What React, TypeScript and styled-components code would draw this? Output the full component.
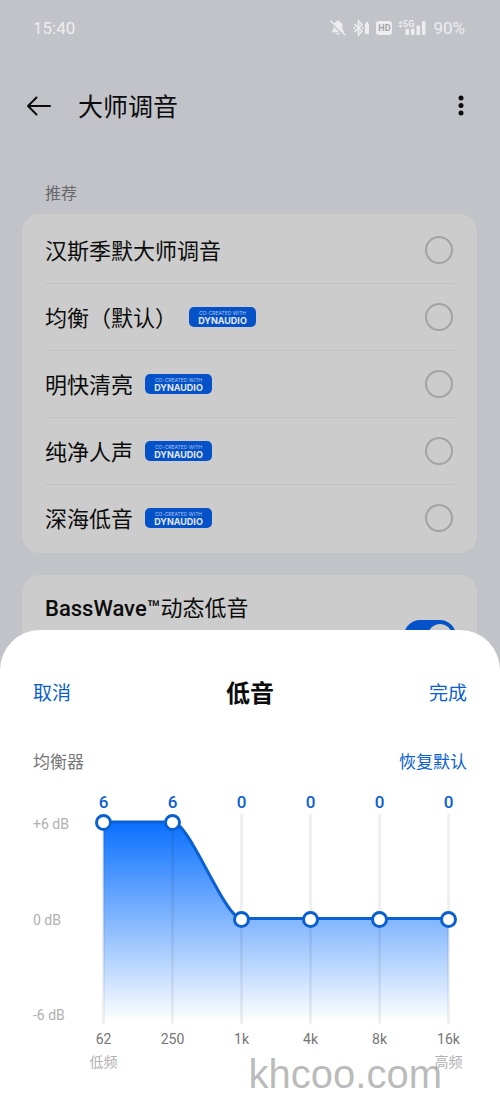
import React, { useState } from "react";
import styled, { createGlobalStyle } from "styled-components";

const GlobalStyle = createGlobalStyle`
  *, *::before, *::after { box-sizing: border-box; }
  body {
    margin: 0;
    background: #c2c3c8;
    font-family: Roboto, "Noto Sans CJK SC", sans-serif;
    color: #0c0c0d;
  }
  button {
    border: 0;
    padding: 0;
    background: none;
    font: inherit;
    color: inherit;
    cursor: pointer;
  }
  svg { display: block; }
`;

const BLUE = "#0a60d0";

const Screen = styled.div`
  min-height: 100vh;
  background: #c2c3c8;
`;

const StatusBar = styled.div`
  display: flex;
  align-items: center;
  justify-content: space-between;
  height: 56px;
  padding: 0 35px 0 33px;
  font-size: 17px;
  color: #ededf0;
`;

const StatusIcons = styled.div`
  display: flex;
  align-items: center;
  gap: 6px;
`;

const AppBar = styled.header`
  display: flex;
  align-items: center;
  height: 100px;
  padding: 0 27px;
`;

const IconButton = styled.button`
  display: flex;
  align-items: center;
  justify-content: center;
  height: 40px;
`;

const PageTitle = styled.h1`
  flex: 1;
  margin: 0 0 0 27px;
  padding-top: 3px;
  font-size: 25px;
  font-weight: 400;
  line-height: 40px;
`;

const Content = styled.main`
  padding: 26px 23px 0 22px;
`;

const SectionLabel = styled.h2`
  margin: 0 0 8px;
  padding-left: 23px;
  font-size: 16px;
  font-weight: 400;
  line-height: 24px;
  color: #66676a;
`;

const Card = styled.section`
  border-radius: 18px;
  background: #cccccc;
`;

const PresetCard = styled(Card)`
  padding: 3px 22px 2px 23px;
`;

const PresetRow = styled.label`
  display: flex;
  align-items: center;
  gap: 12px;
  height: 67px;
  padding-right: 2px;
  border-bottom: 1px solid #c2c2c3;
  cursor: pointer;

  &:last-child {
    height: 66px;
    border-bottom: 0;
  }
`;

const PresetName = styled.span`
  padding-top: 3px;
  font-size: 22px;
  line-height: 32px;
`;

const Radio = styled.input`
  appearance: none;
  width: 28px;
  height: 28px;
  margin: 0 0 0 auto;
  border: 2px solid #a3a3a4;
  border-radius: 50%;
  cursor: pointer;

  &:checked { border: 8px solid #0552c8; }
`;

const BadgeBox = styled.span`
  display: flex;
  flex-direction: column;
  align-items: center;
  justify-content: center;
  width: 67px;
  height: 20px;
  border-radius: 5px;
  background: #0552c8;
  font-family: Inter, sans-serif;
`;

const BadgeSmall = styled.span`
  font-size: 5px;
  line-height: 6px;
  color: #a9c3ea;
`;

const BadgeBrand = styled.span`
  font-size: 9px;
  font-weight: 700;
  line-height: 9px;
  color: #e3e8f0;
`;

const BassCard = styled(Card)`
  display: flex;
  justify-content: space-between;
  align-items: center;
  height: 122px;
  margin-top: 22px;
  padding: 18px 21px 18px 23px;
`;

const BassTitle = styled.label`
  align-self: flex-start;
  font-size: 22px;
  line-height: 32px;
`;

const Latin = styled.span`
  font-weight: 500;
`;

const Toggle = styled.input`
  appearance: none;
  display: flex;
  align-items: center;
  width: 52px;
  height: 32px;
  margin: 0;
  padding: 0 4px;
  border-radius: 16px;
  background: #a3a3a4;
  cursor: pointer;

  &::before {
    content: "";
    width: 24px;
    height: 24px;
    border-radius: 50%;
    background: #cccccc;
  }

  &:checked {
    justify-content: flex-end;
    background: #0552c8;
  }
`;

const Sheet = styled.section`
  position: fixed;
  left: 0;
  right: 0;
  bottom: 0;
  padding: 42px 0 30px;
  border-radius: 40px 40px 0 0;
  background: #ffffff;
`;

const SheetHeader = styled.div`
  display: grid;
  grid-template-columns: 1fr auto 1fr;
  align-items: center;
  padding: 2px 33px 0;
`;

const SheetTitle = styled.h2`
  margin: 0;
  font-size: 24px;
  font-weight: 700;
  line-height: 40px;
`;

const TextButton = styled.button<{ $size: number; $end?: boolean }>`
  justify-self: ${(p) => (p.$end ? "end" : "start")};
  font-size: ${(p) => p.$size}px;
  line-height: 24px;
  color: ${BLUE};
`;

const EqHeader = styled.div`
  display: flex;
  justify-content: space-between;
  margin-top: 36px;
  padding: 0 33px;
`;

const EqTitle = styled.h3`
  margin: 0;
  font-size: 17px;
  font-weight: 400;
  line-height: 24px;
  color: #777777;
`;

const Chart = styled.div`
  display: flex;
  margin-top: 16px;
  padding: 0 17px 0 33px;
`;

const Axis = styled.div`
  display: flex;
  flex-direction: column;
  justify-content: space-between;
  width: 36px;
  height: 207px;
  margin-top: 26px;
  font-size: 14px;
  line-height: 16px;
  color: #b0b0b0;
  white-space: nowrap;
`;

const Plot = styled.div`
  position: relative;
  flex: 1;
  display: grid;
  grid-template-columns: repeat(6, 1fr);
`;

const Curve = styled.svg`
  position: absolute;
  left: 0;
  top: 24px;
  width: 100%;
  height: 210px;
`;

const Band = styled.div`
  position: relative;
  display: flex;
  flex-direction: column;
  align-items: center;
`;

const BandValue = styled.output`
  font-size: 17px;
  font-weight: 500;
  line-height: 24px;
  color: ${BLUE};
`;

const BandSlider = styled.input`
  appearance: none;
  writing-mode: vertical-lr;
  direction: rtl;
  width: 17px;
  height: 210px;
  margin: 0;
  background: none;
  cursor: pointer;

  &::-webkit-slider-runnable-track {
    width: 17px;
    height: 210px;
    background: linear-gradient(90deg, transparent 7px, rgba(0, 0, 0, 0.06) 7px, rgba(0, 0, 0, 0.06) 10px, transparent 10px);
  }

  &::-webkit-slider-thumb {
    appearance: none;
    width: 17px;
    height: 17px;
    border: 3px solid ${BLUE};
    border-radius: 50%;
    background: #ffffff;
  }
`;

const BandLabel = styled.label`
  font-size: 14px;
  line-height: 30px;
  color: #757575;
`;

const BandNote = styled.span`
  font-size: 14px;
  line-height: 16px;
  color: #b0b0b0;
`;

const Watermark = styled.div`
  position: absolute;
  right: 58px;
  bottom: 6px;
  font-family: "Liberation Sans", sans-serif;
  font-size: 40px;
  line-height: 40px;
  color: rgba(120, 120, 120, 0.52);
  pointer-events: none;
`;

const presets = [
  { name: "汉斯季默大师调音", badge: false },
  { name: "均衡（默认）", badge: true },
  { name: "明快清亮", badge: true },
  { name: "纯净人声", badge: true },
  { name: "深海低音", badge: true },
];

const bands = [
  { freq: "62", note: "低频" },
  { freq: "250" },
  { freq: "1k" },
  { freq: "4k" },
  { freq: "8k" },
  { freq: "16k", note: "高频" },
];

const MutedBell = () => (
  <svg width="18" height="18" viewBox="0 0 18 18" fill="currentColor">
    <path d="M9 1.500c.8 0 1.200.5 1.200 1.100 2 .6 3.300 2.300 3.300 4.500v3.400l1.600 2v.8H3v-.8l1.500-2V7.100c0-2.200 1.300-3.900 3.300-4.500C7.800 2 8.200 1.500 9 1.500zM7.300 14.200h3.400c0 1-.7 1.700-1.700 1.700s-1.700-.7-1.700-1.700z" />
    <path d="M.8 2.600L15.800 17" stroke="#c2c3c8" strokeWidth="2" />
    <path d="M1.500 1.800L16.500 16.300" stroke="currentColor" strokeWidth="1.400" />
  </svg>
);

const Bluetooth = () => (
  <svg width="17" height="18" viewBox="0 0 17 18" fill="none" stroke="currentColor" strokeWidth="1.600">
    <path d="M1.500 5.200l7.500 7L5.500 15.700V2.300L9 5.800l-7.500 7" />
    <circle cx="1.200" cy="9" r="1.100" fill="currentColor" stroke="none" />
    <circle cx="9.800" cy="9" r="1.100" fill="currentColor" stroke="none" />
    <path d="M12 4.500h1V3h2v1.500h1V15h-4z" fill="currentColor" stroke="none" />
  </svg>
);

const HdBox = styled.span`
  display: flex;
  align-items: center;
  justify-content: center;
  width: 16px;
  height: 14px;
  border-radius: 3px;
  background: currentColor;
`;

const HdText = styled.span`
  font-size: 9px;
  font-weight: 700;
  line-height: 14px;
  color: #a4a5aa;
`;

const Signal = () => (
  <svg width="29" height="18" viewBox="0 0 29 18" fill="currentColor">
    <path d="M2.500 2l2.500 2.600H0zM2.500 8.800L0 6.200h5z" />
    <text x="5" y="8" fontSize="9" fontWeight="700" fontFamily="Roboto, sans-serif">5G</text>
    <rect x="7.500" y="10" width="3.500" height="6" rx=".8" />
    <rect x="13" y="9.500" width="3.500" height="6.500" rx=".8" />
    <rect x="18.500" y="6.500" width="3.500" height="9.500" rx=".8" />
    <rect x="24" y="2" width="3.500" height="14" rx=".8" />
  </svg>
);

const DynaudioBadge = () => (
  <BadgeBox>
    <BadgeSmall>CO-CREATED WITH</BadgeSmall>
    <BadgeBrand>DYNAUDIO</BadgeBrand>
  </BadgeBox>
);

const pointX = (i: number) => 50 + i * 100;
const pointY = (v: number) => 8 + ((6 - v) / 12) * 193;

function curvePath(values: number[]) {
  return values.reduce((path, v, i) => {
    if (i === 0) return `M${pointX(0)} ${pointY(v)}`;
    const before = pointY(values[i - 1]);
    return `${path} C${pointX(i - 1) + 25} ${before} ${pointX(i) - 25} ${pointY(v)} ${pointX(i)} ${pointY(v)}`;
  }, "");
}

export default function App() {
  const [values, setValues] = useState([6, 6, 0, 0, 0, 0]);
  const line = curvePath(values);

  return (
    <Screen lang="zh-CN">
      <GlobalStyle />
      <StatusBar>
        <span>15:40</span>
        <StatusIcons>
          <MutedBell />
          <Bluetooth />
          <HdBox><HdText>HD</HdText></HdBox>
          <Signal />
          <span>90%</span>
        </StatusIcons>
      </StatusBar>

      <AppBar>
        <IconButton aria-label="返回">
          <svg width="24" height="20" viewBox="0 0 24 20" fill="none" stroke="currentColor" strokeWidth="2" strokeLinecap="round" strokeLinejoin="round">
            <path d="M23 10H1.200M9.500 1.500L1 10l8.500 8.500" />
          </svg>
        </IconButton>
        <PageTitle>大师调音</PageTitle>
        <IconButton aria-label="更多">
          <svg width="24" height="24" viewBox="0 0 24 24" fill="currentColor">
            <circle cx="12" cy="4" r="2.500" />
            <circle cx="12" cy="11.500" r="2.500" />
            <circle cx="12" cy="19" r="2.500" />
          </svg>
        </IconButton>
      </AppBar>

      <Content>
        <SectionLabel>推荐</SectionLabel>
        <PresetCard>
          {presets.map((preset) => (
            <PresetRow key={preset.name}>
              <PresetName>{preset.name}</PresetName>
              {preset.badge && <DynaudioBadge />}
              <Radio type="radio" name="preset" />
            </PresetRow>
          ))}
        </PresetCard>
        <BassCard>
          <BassTitle htmlFor="bass-wave"><Latin>BassWave™</Latin>动态低音</BassTitle>
          <Toggle id="bass-wave" type="checkbox" defaultChecked />
        </BassCard>
      </Content>

      <Sheet>
        <SheetHeader>
          <TextButton $size={19}>取消</TextButton>
          <SheetTitle>低音</SheetTitle>
          <TextButton $size={19} $end>完成</TextButton>
        </SheetHeader>
        <EqHeader>
          <EqTitle>均衡器</EqTitle>
          <TextButton $size={17} $end onClick={() => setValues([6, 6, 0, 0, 0, 0])}>恢复默认</TextButton>
        </EqHeader>
        <Chart>
          <Axis>
            <span>+6 dB</span>
            <span>0 dB</span>
            <span>-6 dB</span>
          </Axis>
          <Plot>
            <Curve viewBox="0 0 600 210" preserveAspectRatio="none" aria-hidden="true">
              <defs>
                <linearGradient id="eq-fill" gradientUnits="userSpaceOnUse" x1="0" y1="8" x2="0" y2="208">
                  <stop offset="0" stopColor="#0a70ff" />
                  <stop offset="1" stopColor="#0a70ff" stopOpacity="0" />
                </linearGradient>
              </defs>
              <path d={`${line} V210 H50 Z`} fill="url(#eq-fill)" />
              <path d={line} fill="none" stroke={BLUE} strokeWidth="3" vectorEffect="non-scaling-stroke" />
            </Curve>
            {bands.map((band, i) => (
              <Band key={band.freq}>
                <BandValue htmlFor={`band-${band.freq}`}>{values[i]}</BandValue>
                <BandSlider
                  id={`band-${band.freq}`}
                  type="range"
                  min={-6}
                  max={6}
                  value={values[i]}
                  onChange={(e) => setValues(values.map((v, n) => (n === i ? Number(e.target.value) : v)))}
                />
                <BandLabel htmlFor={`band-${band.freq}`}>{band.freq}</BandLabel>
                {band.note && <BandNote>{band.note}</BandNote>}
              </Band>
            ))}
          </Plot>
        </Chart>
        <Watermark>khcoo.com</Watermark>
      </Sheet>
    </Screen>
  );
}
